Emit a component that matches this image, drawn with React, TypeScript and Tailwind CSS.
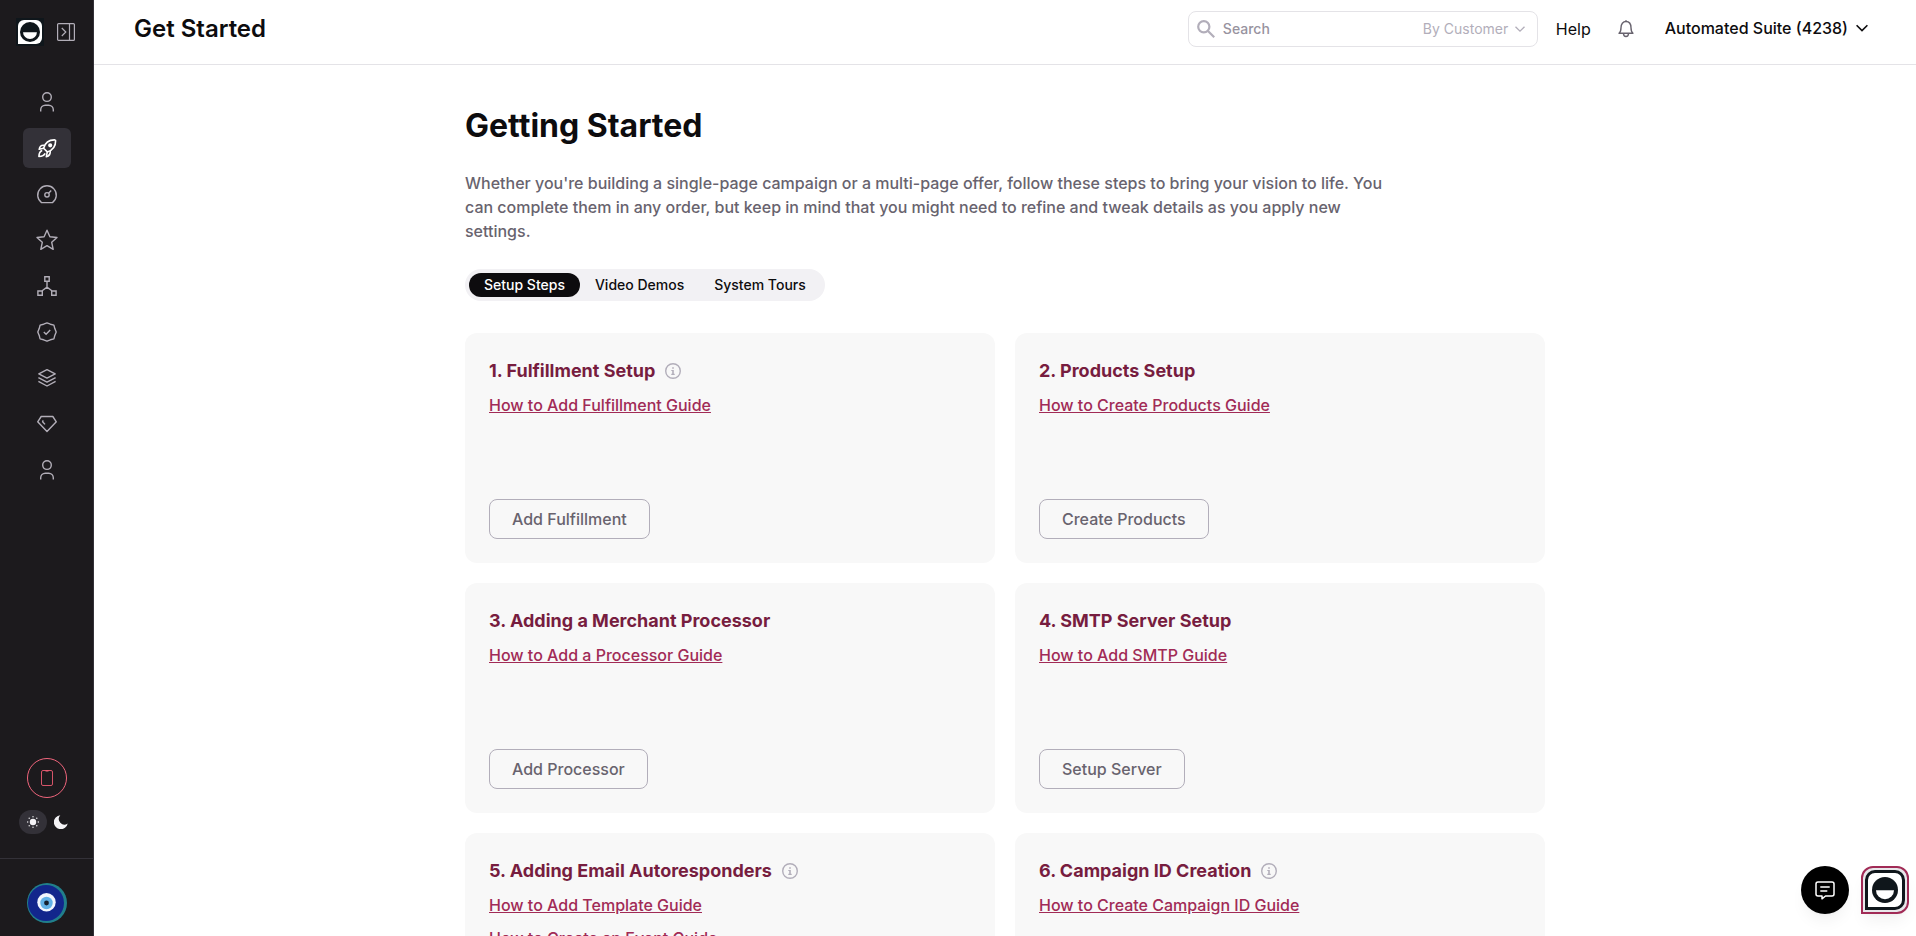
import { useState } from "react";
import type { ReactNode } from "react";

type Step = { title: string; info?: boolean; links: string[]; action: string };

const steps: Step[] = [
    { title: "1. Fulfillment Setup", info: true, links: ["How to Add Fulfillment Guide"], action: "Add Fulfillment" },
    { title: "2. Products Setup", links: ["How to Create Products Guide"], action: "Create Products" },
    { title: "3. Adding a Merchant Processor", links: ["How to Add a Processor Guide"], action: "Add Processor" },
    { title: "4. SMTP Server Setup", links: ["How to Add SMTP Guide"], action: "Setup Server" },
    { title: "5. Adding Email Autoresponders", info: true, links: ["How to Add Template Guide", "How to Create an Event Guide"], action: "Add Autoresponder" },
    { title: "6. Campaign ID Creation", info: true, links: ["How to Create Campaign ID Guide"], action: "Create Campaign" },
]

const tabs = ["Setup Steps", "Video Demos", "System Tours"]

function Icon({ children, className = "size-6" }: { children: ReactNode, className?: string }) {
    return <svg viewBox="0 0 24 24" fill="none" stroke="currentColor" strokeWidth="1.4" className={className} aria-hidden="true">{children}</svg>
}

const userIcon = <Icon>
    <circle cx="12" cy="7.1" r="4.3" />
    <path d="M5.7 21.6v-1.8a4.6 4.6 0 0 1 4.6-4.6h3.4a4.6 4.6 0 0 1 4.6 4.6v1.8" />
</Icon>

const navItems = [
    { label: "Customers", icon: userIcon },
    {
        label: "Get Started", icon: <Icon>
            <g strokeWidth="1.6" strokeLinejoin="round">
                <path d="M8.6 12.2C10 7.2 13.7 3.7 19.9 3.9c.6 0 .7.3.7.8.1 6-3.4 9.6-8.3 11.2z" />
                <path d="M9.3 9.3c-3-.4-4.7 1.4-5.1 4l4.4-1.1M15.2 15c.4 3-1.3 5-3.9 5.8l1-4.9" />
                <path d="M7.2 14.5c-2.2.7-3.2 2.8-3.3 6 3.2-.1 5.3-.9 6.2-3.1" />
                <circle cx="15.2" cy="9.3" r="1.3" fill="currentColor" />
            </g>
        </Icon>
    },
    {
        label: "Dashboard", icon: <Icon>
            <path d="M6.5 20.6a9.3 9.3 0 1 1 11 0z" strokeLinejoin="round" />
            <circle cx="12" cy="12.8" r="2.2" />
            <path d="m13.6 11.2 2.6-2.7" />
        </Icon>
    },
    {
        label: "Favorites", icon: <Icon>
            <path d="m12 2.2 2.9 6.5 7.1.8-5.3 4.8 1.5 7-6.2-3.6-6.2 3.6 1.5-7L2 9.5l7.1-.8z" strokeLinejoin="round" />
        </Icon>
    },
    {
        label: "Campaigns", icon: <Icon>
            <path d="M9.8 2.8h4.4v4.4H9.8zM2.9 17h4.4v4.2H2.9zM16.7 17h4.4v4.2h-4.4zM12 7.2v6M6.8 17l5.2-3.8 5.2 3.8" />
        </Icon>
    },
    {
        label: "Approvals", icon: <Icon>
            <path d="m12 2.9 3.4 1.3 3.5.9.9 3.5 1.4 3.4-1.4 3.4-.9 3.5-3.5.9-3.4 1.4-3.4-1.4-3.5-.9-.9-3.5L2.8 12l1.4-3.4.9-3.5 3.5-.9z" strokeLinejoin="round" />
            <path d="m8.8 12.1 2.3 2.2 4.1-4.2" />
        </Icon>
    },
    {
        label: "Products", icon: <Icon>
            <path d="m12 3.7 8.2 4.2L12 12.1 3.8 7.9zM3.4 11.6l8.6 4.5 8.6-4.5M3.4 15.4l8.6 4.6 8.6-4.6" strokeLinejoin="round" />
        </Icon>
    },
    {
        label: "Rewards", icon: <Icon>
            <path d="M6.2 4.5h11.6l3.5 5.3L12 19.6 2.7 9.8zM8.2 8.4l-.6 1.3 2.4 2.7" strokeLinejoin="round" />
        </Icon>
    },
    { label: "Account", icon: userIcon },
]

function InfoIcon() {
    return <svg viewBox="0 0 16 16" className="size-4" aria-hidden="true">
        <circle cx="8" cy="8" r="7.3" fill="none" stroke="#b2aeba" strokeWidth="1.4" />
        <path d="M7.2 4.3h1.6v1.4H7.2zM6.3 6.9h2.5v3.9h.9v1.1H6.3v-1.1h.9V8h-.9z" fill="#b2aeba" />
    </svg>
}

function Smile({ className }: { className: string }) {
    return <svg viewBox="0 0 26 26" className={className} aria-hidden="true">
        <circle cx="13" cy="13" r="13" fill="#0f161b" />
        <path d="M4 13.2h18a9 9 0 0 1-18 0z" fill="#fff" />
    </svg>
}

function Chevron({ className }: { className: string }) {
    return <svg viewBox="0 0 12 8" fill="none" stroke="currentColor" strokeWidth="1.6" className={className} aria-hidden="true">
        <path d="m.6 1.2 5.4 5.4 5.4-5.4" />
    </svg>
}

function Sidebar() {
    return (
        <aside className="flex w-[94px] shrink-0 flex-col border-r border-[#333138] bg-[#1c1a1d] text-[#b2aeb8]">
            <div className="flex gap-3 pl-4 pt-[18px]">
                <a href="#" aria-label="Home" className="flex size-7 items-center justify-center bg-[#0f161b]">
                    <span className="flex size-6 items-center justify-center rounded-md rounded-bl-none bg-white"><Smile className="size-5" /></span>
                </a>
                <button aria-label="Expand menu">
                    <svg viewBox="0 0 20 20" fill="none" stroke="currentColor" strokeWidth="1.2" className="size-5">
                        <rect x="1.6" y="1.6" width="16.8" height="16.8" rx="1" />
                        <path d="M13.5 1.6v16.8M5.8 6l4 4-4 4" />
                    </svg>
                </button>
            </div>
            <nav className="mt-9 flex flex-col items-center gap-1.5">
                {navItems.map((item) => (
                    <a
                        key={item.label}
                        href="#"
                        aria-label={item.label}
                        className={item.label === "Get Started"
                            ? "flex h-10 w-12 items-center justify-center rounded-md bg-[#333138] text-white"
                            : "flex h-10 w-12 items-center justify-center rounded-md"}
                    >
                        {item.icon}
                    </a>
                ))}
            </nav>

            <div className="mt-auto flex flex-col items-center gap-3 pb-6">
                <button aria-label="Mobile app" className="flex size-10 items-center justify-center rounded-full border border-[#f0657c]">
                    <svg viewBox="0 0 12 16" fill="none" stroke="#d65469" className="h-4 w-3" aria-hidden="true">
                        <rect x=".5" y=".5" width="11" height="15" rx="1.5" />
                        <path d="M4.5 1h3" stroke="#f0657c" />
                    </svg>
                </button>
                <div className="flex items-center">
                    <button aria-label="Light mode" className="flex h-6 w-7 items-center justify-center rounded-full bg-[#333138] text-[#f4f3f6]">
                        <svg viewBox="0 0 12 12" fill="currentColor" className="size-3" aria-hidden="true">
                            <circle cx="6" cy="6" r="3.2" />
                            {[[6, .7], [6, 11.3], [.7, 6], [11.3, 6], [2.2, 2.2], [9.8, 2.2], [2.2, 9.8], [9.8, 9.8]].map(([x, y]) => (
                                <circle key={`${x}-${y}`} cx={x} cy={y} r=".7" />
                            ))}
                        </svg>
                    </button>
                    <button aria-label="Dark mode" className="flex h-6 w-7 items-center justify-center text-[#f4f3f6]">
                        <svg viewBox="0 0 14 14" fill="currentColor" className="size-3.5" aria-hidden="true">
                            <path d="M6.3.2a5.6 5.6 0 0 0 7.4 8.3A7 7 0 1 1 6.3.2z" />
                        </svg>
                    </button>
                </div>
            </div>
            <div className="flex justify-center border-t border-[#333138] pb-[13px] pt-6">
                <button aria-label="Profile">
                    <svg viewBox="0 0 40 40" className="size-10" aria-hidden="true">
                        <circle cx="20" cy="20" r="20" fill="#217f8b" />
                        <circle cx="19" cy="20" r="18" fill="#12268c" />
                        <circle cx="19.5" cy="19.3" r="9.2" fill="#f1f6fd" />
                        <circle cx="19.5" cy="20" r="6.2" fill="#62b2e6" />
                        <circle cx="19.5" cy="20" r="2.4" fill="#15202c" />
                    </svg>
                </button>
            </div>
        </aside>
    )
}

function Header() {
    return (
        <header className="flex h-[65px] shrink-0 items-start justify-between border-b border-[#e4e3e7] pl-10 pr-12 pt-[11px]">
            <h2 className="text-2xl font-semibold leading-9">Get Started</h2>
            <div className="flex h-9 items-center">
                <div className="flex h-9 w-[350px] items-center rounded-lg border border-[#e4e3e7] pl-2 pr-3">
                    <svg viewBox="0 0 18 18" fill="none" stroke="#b2aeba" strokeWidth="2.2" className="size-[18px] shrink-0" aria-hidden="true">
                        <circle cx="6.8" cy="6.8" r="5.6" />
                        <path d="m11 11 6.2 6.2" />
                    </svg>
                    <input
                        type="text"
                        aria-label="Search"
                        placeholder="Search"
                        className="ml-2 min-w-0 flex-1 text-sm font-medium outline-none placeholder:text-[#98939f]"
                    />
                    <select aria-label="Search by" className="w-[86px] appearance-none text-sm text-[#b2aeba] outline-none">
                        <option>By Customer</option>
                        <option>By Order</option>
                    </select>
                    <Chevron className="ml-1.5 h-2 w-2.5 text-[#b2aeba]" />
                </div>
                <a href="#" className="ml-[18px] text-base">Help</a>
                <button aria-label="Notifications" className="ml-[27px] text-[#68636e]">
                    <svg viewBox="0 0 16 18" fill="none" stroke="currentColor" strokeWidth="1.4" className="h-[18px] w-4" aria-hidden="true">
                        <path d="M1 13.2c1.800-1.300 2-2.800 2-5.400C3 4 5 1.500 8 1.500s5 2.500 5 6.300c0 2.600.2 4.100 2 5.400z" strokeLinejoin="round" />
                        <path d="M5.5 13.500c0 3.900 5 3.900 5 0M8 .2v1.300" />
                    </svg>
                </button>
                <button className="ml-[31px] flex items-center gap-2 whitespace-nowrap pb-0.5 text-base font-medium">
                    Automated Suite (4238)
                    <Chevron className="h-2 w-3" />
                </button>
            </div>
        </header>
    )
}

function StepCard({ step }: { step: Step }) {
    return (
        <section className="flex min-h-[230px] flex-col items-start rounded-xl bg-[#f8f8f8] p-6">
            <div className="flex items-center gap-2.5">
                <h3 className="text-lg font-bold leading-7 text-[#771d3f]">{step.title}</h3>
                {step.info && <button aria-label={`About ${step.title}`}><InfoIcon /></button>}
            </div>
            <div className="mb-6 mt-2 flex flex-col items-start gap-[9px]">
                {step.links.map((link) => (
                    <a key={link} href="#" className="text-base font-medium text-[#a12b56] underline">{link}</a>
                ))}
            </div>
            <button className="mt-auto h-10 rounded-lg border border-[#b2aeba] px-[22px] text-base font-medium text-[#68636e]">{step.action}</button>
        </section>
    )
}

export default function App() {
    const [tab, setTab] = useState(tabs[0])

    return (
        <div className="flex h-screen overflow-hidden bg-white font-['Inter',sans-serif] text-[#0d0c0e]">
            <Sidebar />
            <div className="flex min-w-0 flex-1 flex-col">
                <Header />
                <main className="flex-1 overflow-y-auto [scrollbar-width:none]">
                    <div className="mx-auto max-w-[1080px] pb-10 pt-[41px]">
                        <h1 className="text-[32px] font-bold leading-10">Getting Started</h1>
                        <p className="mt-[25px] max-w-[920px] text-base font-medium text-[#68636e]">
                            Whether you're building a single-page campaign or a multi-page offer, follow these steps to bring your vision to life. You can complete them in any order, but keep in mind that you might need to refine and tweak details as you apply new settings.
                        </p>
                        <div role="tablist" className="mt-[26px] flex w-fit rounded-full bg-[#f2f1f4] p-1">
                            {tabs.map((name) => (
                                <button
                                    key={name}
                                    role="tab"
                                    aria-selected={tab === name}
                                    onClick={() => setTab(name)}
                                    className={tab === name
                                        ? "h-6 rounded-full bg-[#0d0c0e] px-[15px] text-sm font-medium text-white"
                                        : "h-6 rounded-full px-[15px] text-sm font-medium"}
                                >
                                    {name}
                                </button>
                            ))}
                        </div>
                        <div className="mt-8 grid grid-cols-2 gap-5">
                            {steps.map((step) => <StepCard key={step.title} step={step} />)}
                        </div>
                    </div>
                </main>
            </div>

            {/* Floating chat and assistant launchers */}
            <div className="fixed bottom-[22px] right-[7px] flex gap-3">
                <button aria-label="Feedback" className="flex size-12 items-center justify-center rounded-full bg-black text-white shadow-lg shadow-black/5">
                    <svg viewBox="0 0 20 20" fill="none" stroke="currentColor" strokeWidth="1.5" strokeLinejoin="round" className="size-5" aria-hidden="true">
                        <path d="M3 2h14a2 2 0 0 1 2 2v10a2 2 0 0 1-2 2h-6.5L7 18.8V16H3a2 2 0 0 1-2-2V4a2 2 0 0 1 2-2z" />
                        <path d="M5.3 7h9.4M5.3 11h7" />
                    </svg>
                </button>
                <button aria-label="Assistant" className="flex size-12 items-center justify-center rounded-xl rounded-bl-none border-2 border-[#a12b56] bg-[#e8e7ea] shadow-lg shadow-black/5">
                    <span className="flex size-10 items-center justify-center rounded-[10px] rounded-bl-none border-3 border-[#0f161b] bg-white">
                        <Smile className="size-[26px]" />
                    </span>
                </button>
            </div>
        </div>
    )
}
